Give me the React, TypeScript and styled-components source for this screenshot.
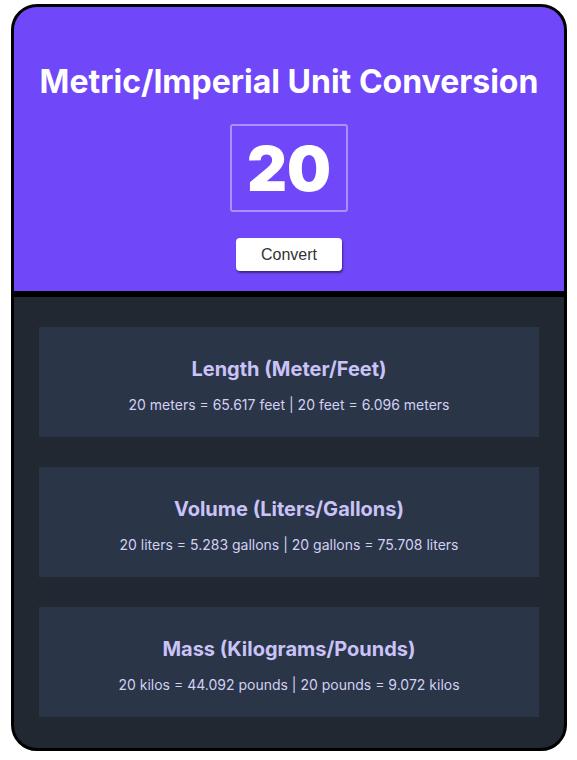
import React from "react";
import styled, { createGlobalStyle } from "styled-components";

const Global = createGlobalStyle`
  html, body { margin: 0; padding: 0; background: #ffffff; }
  body { font-family: Inter, "Noto Sans", sans-serif; }
`;

const Page = styled.div`
  padding: 4px 10px 10px 11px;
`;

const Card = styled.div`
  width: 550px;
  border: 3px solid #000;
  border-radius: 26px;
  overflow: hidden;
  background: #222831;
`;

const Header = styled.header`
  background: #7047f9;
  border-bottom: 6px solid #000;
  height: 290px;
  box-sizing: border-box;
  display: flex;
  flex-direction: column;
  align-items: center;
  padding-top: 56px;
`;

const Title = styled.h1`
  margin: 0;
  font-family: Inter, sans-serif;
  font-weight: 700;
  font-size: 32px;
  line-height: 38px;
  color: #ffffff;
`;

const ValueBox = styled.div`
  margin-top: 23px;
  width: 118px;
  height: 88px;
  box-sizing: border-box;
  border: 2px solid rgba(255, 255, 255, 0.4);
  border-radius: 3px;
  display: flex;
  align-items: center;
  justify-content: center;
  font-family: Inter, sans-serif;
  font-weight: 900;
  font-size: 62px;
  color: #ffffff;
`;

const ConvertButton = styled.button`
  margin-top: 26px;
  width: 106px;
  height: 33px;
  background: #ffffff;
  border: none;
  border-radius: 4px;
  box-shadow: 1px 2px 2px rgba(0, 0, 0, 0.45);
  font-family: "Liberation Sans", Arial, sans-serif;
  font-size: 16px;
  color: #333333;
  cursor: pointer;
`;

const Results = styled.section`
  display: flex;
  flex-direction: column;
  gap: 30px;
  padding: 30px 25px 31px;
`;

const ResultBox = styled.div`
  background: #2a3547;
  height: 110px;
  box-sizing: border-box;
  padding-top: 30px;
  display: flex;
  flex-direction: column;
  align-items: center;
`;

const ResultTitle = styled.h2`
  margin: 0;
  font-family: Inter, sans-serif;
  font-weight: 700;
  font-size: 20px;
  line-height: 24px;
  color: #c9c3f7;
`;

const ResultText = styled.p`
  margin: 14px 0 0;
  font-family: Inter, sans-serif;
  font-size: 14px;
  line-height: 20px;
  color: #d3d0f4;
`;

const items = [
  {
    title: "Length (Meter/Feet)",
    text: "20 meters = 65.617 feet | 20 feet = 6.096 meters",
  },
  {
    title: "Volume (Liters/Gallons)",
    text: "20 liters = 5.283 gallons | 20 gallons = 75.708 liters",
  },
  {
    title: "Mass (Kilograms/Pounds)",
    text: "20 kilos = 44.092 pounds | 20 pounds = 9.072 kilos",
  },
];

export default function App() {
  return (
    <>
      <Global />
      <Page>
        <Card>
          <Header>
            <Title>Metric/Imperial Unit Conversion</Title>
            <ValueBox>20</ValueBox>
            <ConvertButton>Convert</ConvertButton>
          </Header>
          <Results>
            {items.map((it) => (
              <ResultBox key={it.title}>
                <ResultTitle>{it.title}</ResultTitle>
                <ResultText>{it.text}</ResultText>
              </ResultBox>
            ))}
          </Results>
        </Card>
      </Page>
    </>
  );
}
